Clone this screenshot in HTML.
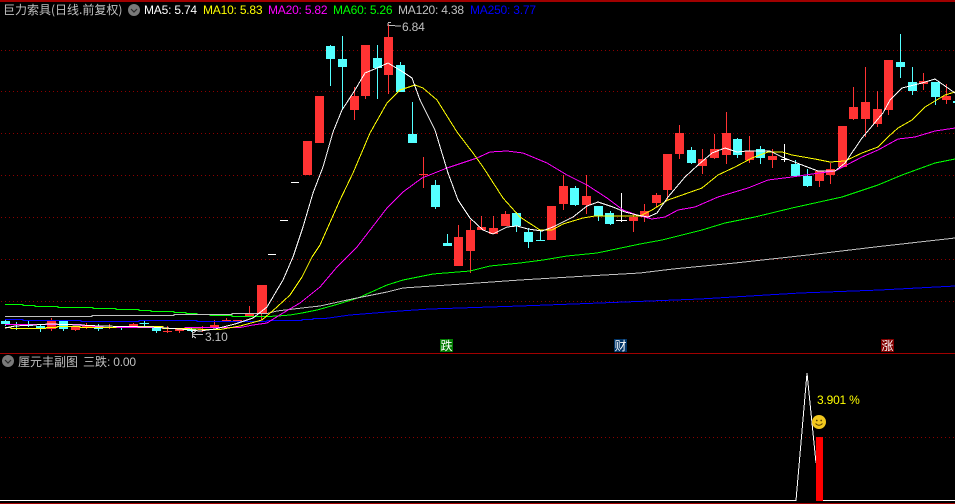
<!DOCTYPE html>
<html lang="zh">
<head>
<meta charset="utf-8">
<title>巨力索具</title>
<style>
html,body{margin:0;padding:0;background:#000;}
body{width:955px;height:504px;overflow:hidden;position:relative;}
svg{position:absolute;left:0;top:0;}
.t{position:absolute;font:12px/14px "Liberation Sans","WenQuanYi Zen Hei","Noto Sans CJK SC",sans-serif;white-space:nowrap;color:#c0c0c0;letter-spacing:-.2px;}
.c{font-family:"WenQuanYi Zen Hei","Noto Sans CJK SC",sans-serif;letter-spacing:0;}
.b{position:absolute;width:13px;height:13px;font:12px/13px "WenQuanYi Zen Hei","Noto Sans CJK SC",sans-serif;color:#fff;text-align:center;}
</style>
</head>
<body>
<svg width="955" height="504" viewBox="0 0 955 504" xmlns="http://www.w3.org/2000/svg">
<rect width="955" height="504" fill="#000"/>
<g shape-rendering="crispEdges">
<rect x="0" y="0" width="955" height="2" fill="#a00000"/>
<rect x="0" y="353" width="955" height="1" fill="#a00000"/>
<rect x="0" y="503" width="955" height="1" fill="#a00000"/>
<path d="M1 50.5H955M1 91.5H955M1 133.5H955M1 175.5H955M1 217.5H955M1 259.5H955M1 301.5H955M1 437.5H955" stroke="#8c0000" stroke-width="1" stroke-dasharray="1 3" fill="none"/>

<!-- cyan candles -->
<path fill="#54ffff" d="M1 321h9v3h-9zM24 324h9v2h-9zM36 326h9v3h-9zM59 321h9v8h-9zM94 327h9v2h-9zM152 328h9v3h-9zM187 329h9v2h-9zM326 46h9v13h-9zM338 59h9v8h-9zM373 58h9v10h-9zM396 65h9v27h-9zM408 134h9v9h-9zM431 185h9v22h-9zM443 243h9v3h-9zM512 213h9v13h-9zM524 232h9v10h-9zM536 240h9v1h-9zM570 188h9v17h-9zM594 206h9v10h-9zM605 213h9v11h-9zM687 150h9v13h-9zM733 139h9v16h-9zM756 149h9v9h-9zM791 164h9v12h-9zM803 176h9v10h-9zM896 62h9v5h-9zM908 82h9v9h-9zM931 82h9v15h-9zM953 101h2v2h-2z"/>
<path stroke="#54ffff" fill="none" d="M5.5 319V326M16.5 322V330M28.5 321V327M40.5 325V332M63.5 320V331M98.5 324V331M121.5 327V330M156.5 327V333M191.5 328V332M144.5 321V327M139.5 323.5H149M330.5 45V86M342.5 36V110M377.5 45V99M400.5 62V92M412.5 102V134M435.5 180V209M447.5 234V246M516.5 212V232M528.5 228V248M540.5 231V241M575.5 186V206M598.5 206V221M610.5 211V225M691.5 147V164M737.5 138V158M760.5 146V164M795.5 160V176M807.5 169V187M900.5 34V78M912.5 67V95M935.5 82V105"/>

<!-- red candles -->
<path fill="#ff3333" d="M47 321h9v8h-9zM71 327h9v3h-9zM82 325h11v2h-11zM129 324h9v3h-9zM175 329h9v2h-9zM198 329h9v1h-9zM210 325h9v2h-9zM222 320h9v1h-9zM233 320h9v1h-9zM245 314h9v2h-9zM257 285h10v28h-10zM303 141h9v34h-9zM315 96h9v47h-9zM350 96h9v14h-9zM361 45h9v51h-9zM384 37h9v38h-9zM419 174h9v1h-9zM454 237h9v29h-9zM466 230h9v21h-9zM477 227h9v3h-9zM489 228h9v6h-9zM501 214h9v12h-9zM547 206h9v34h-9zM559 186h9v18h-9zM582 196h9v9h-9zM629 217h9v4h-9zM640 211h9v6h-9zM652 195h9v8h-9zM663 154h9v36h-9zM675 133h9v21h-9zM698 159h9v7h-9zM710 149h9v9h-9zM722 133h9v22h-9zM745 151h9v9h-9zM768 156h9v4h-9zM815 171h9v10h-9zM826 169h9v6h-9zM838 126h9v41h-9zM849 107h9v12h-9zM861 102h9v17h-9zM873 109h9v15h-9zM884 60h9v50h-9zM919 81h9v3h-9zM942 96h9v4h-9z"/>
<path stroke="#ff3333" fill="none" d="M51.5 318V331M75.5 326V331M86.5 323V329M109.5 324V329M133.5 323V328M167.5 326V333M179.5 328V333M202.5 326V332M214.5 320V328M226.5 318V321M249.5 306V316M261.5 285V320M163 331.5H172M354.5 87V120M365.5 45V99M388.5 24V94M423.5 157V188M458.5 225V266M470.5 220V273M481.5 216V230M493.5 216V234M505.5 211V226M551.5 206V240M563.5 175V210M586.5 175V214M633.5 214V232M644.5 204V222M656.5 193V207M667.5 154V200M679.5 125V159M702.5 149V174M714.5 134V159M726.5 112V164M749.5 136V163M772.5 149V168M819.5 171V187M830.5 163V184M853.5 87V120M865.5 67V137M877.5 91V127M888.5 60V115M923.5 73V90M946.5 84V104M419 174.5H428"/>

<!-- white doji dashes -->
<path stroke="#ffffff" fill="none" d="M268 254.5H276M280 220.5H288M291 182.5H299M621.5 193V222M616 220.5H627M784.5 144V162M781 159.5H789"/>

<!-- moving averages -->
<g fill="none" stroke-width="1">
<path stroke="#0000ff" d="M5 319.5H23V320.5H81V321.5H139V320.5H197V321.5H267V320.5H302V319.5H313V318.5H325L350 315L400 311L430 309L520 306L600 303L700 299L800 293L880 290L955 286"/>
<path stroke="#00ff00" d="M5 304.5H23V305.5H35V306.5H58V307.5H93V308.5H116V309.5H139V310.5H151V311.5H174V312.5H186V313.5H197V314.5H210V315.5H232V316.5H267L278 316L290 315L302 313L317 310L335 305L358 298L387 285L403 280L433 274L470 271L490 266L520 263L543 260L567 256L597 253L640 244L662 240L702 230L725 223L755 217L792 208L842 197L878 185L902 175L935 163L955 159"/>
<path stroke="#c0c0c0" d="M5 316.5H92V315.5H174V314.5H232V313.5H267L277 311L302 308L320 306L352 299L387 292L403 288L463 284L520 280L587 276L640 273L673 269L735 263L808 255L875 247L955 238"/>
<path stroke="#ff00ff" d="M5 324.5H81V325.5H93V326.5H103V327.5H163V328.5H185V327.5H240L253 325L267 323L283 313L300 303L320 287L337 267L357 247L387 208L403 192L422 178L447 168L477 158L490 152L507 151L523 153L547 163L567 175L587 185L607 198L623 210L637 215L652 219L665 217L678 210L695 207L718 197L748 188L768 180L792 177L812 174L835 171L862 157L878 150L898 139L915 137L935 131L955 128"/>
<path stroke="#ffff00" d="M5 327.5H11V328.5H46V327.5H57V326.5H80V327.5H116V326.5H163V328.5H185L207 329.5H220L240 326L262 320L277 307L290 295L302 277L312 257L320 245L340 200L353 173L370 133L387 103L400 90L415 85L423 88L437 100L457 132L473 153L483 167L503 198L520 217L540 230L552 230L563 224L583 218L595 216L640 216L652 210L668 200L702 188L718 175L735 167L752 158L768 152L782 152L792 155L815 159L830 162L845 161L862 153L878 147L888 137L898 128L912 120L925 107L945 95L955 92"/>
<path stroke="#ffffff" d="M5 328L15 326L50 324L80 325L100 326L150 327L180 329L200 331L215 329L235 324L253 318L267 307L283 280L293 257L303 227L313 193L323 167L333 132L342 110L355 90L365 73L377 68L388 63L403 72L412 78L420 100L435 130L448 173L458 200L470 218L483 230L493 234L507 227L517 226L528 229L542 231L553 227L573 217L587 206L598 202L613 207L625 212L637 215L648 217L657 213L668 197L685 177L698 165L712 153L725 148L737 152L747 151L770 151L782 157L802 165L818 171L835 171L845 163L862 138L883 113L890 100L902 88L922 83L935 79L955 93"/>
</g>

<!-- high/low leaders -->
<path stroke="#c0c0c0" fill="none" d="M388 22.5H391M388 23V26M389 25.5L401 26M192.5 331V338M193 334.5H203M193 333L196 331M193 336L196 338"/>

<!-- lower pane -->
<path stroke="#ffffff" fill="none" stroke-width="1" d="M0 500.5H796L807 373L816 463"/>
<path stroke="#ffffff" fill="none" d="M823 500.5H955"/>
<rect x="816" y="437" width="7" height="64" fill="#ff0000"/>
</g>

<!-- header arrows -->
<circle cx="134" cy="10" r="6" fill="#7a7a7a"/>
<path d="M131 9l3 3 3-3" stroke="#2a2a2a" stroke-width="1.2" fill="none"/>
<circle cx="8" cy="361" r="6" fill="#7a7a7a"/>
<path d="M5 360l3 3 3-3" stroke="#2a2a2a" stroke-width="1.2" fill="none"/>

<!-- smiley -->
<circle cx="819" cy="422" r="7" fill="#f2c81e"/>
<circle cx="816.8" cy="420.5" r="0.9" fill="#5a4300"/>
<circle cx="821.2" cy="420.5" r="0.9" fill="#5a4300"/>
<path d="M815.5 423.5q3.5 3.5 7 0" stroke="#5a4300" stroke-width="0.9" fill="none"/>
</svg>

<div class="t" style="left:3px;top:3px;"><span class="c">巨力索具(日线.前复权)</span></div>
<div class="t" style="left:144px;top:3px;color:#fff;">MA5: 5.74</div>
<div class="t" style="left:203px;top:3px;color:#ff0;">MA10: 5.83</div>
<div class="t" style="left:268px;top:3px;color:#f0f;">MA20: 5.82</div>
<div class="t" style="left:333px;top:3px;color:#0f0;">MA60: 5.26</div>
<div class="t" style="left:398px;top:3px;color:#c0c0c0;">MA120: 4.38</div>
<div class="t" style="left:470px;top:3px;color:#00f;">MA250: 3.77</div>
<div class="t" style="left:402px;top:20px;">6.84</div>
<div class="t" style="left:205px;top:330px;">3.10</div>
<div class="b" style="left:440px;top:339px;background:#007a00;">跌</div>
<div class="b" style="left:614px;top:339px;background:#003366;">财</div>
<div class="b" style="left:881px;top:339px;background:#800000;">涨</div>
<div class="t" style="left:18px;top:355px;"><span class="c">厘元丰副图</span></div>
<div class="t" style="left:83px;top:355px;"><span class="c">三跌</span>: 0.00</div>
<div class="t" style="left:817px;top:393px;color:#ff0;">3.901 %</div>
</body>
</html>
